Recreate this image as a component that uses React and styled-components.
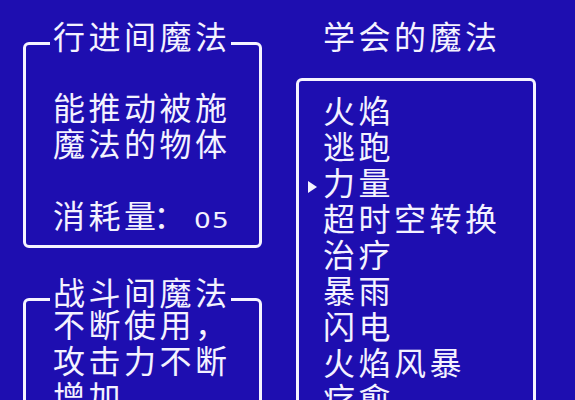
import React from "react";
import styled, { createGlobalStyle } from "styled-components";

const GlobalStyle = createGlobalStyle`
  html, body {
    margin: 0;
    padding: 0;
    background: #1e0eb0;
  }
  body {
    width: 575px;
    height: 400px;
    overflow: hidden;
    font-family: "Noto Sans CJK SC", "Noto Sans", sans-serif;
    font-weight: 400;
    color: #f4f2ff;
  }
`;

const Screen = styled.div`
  display: flex;
  align-items: flex-start;
  gap: 34px;
  padding-left: 23px;
  height: 400px;
  overflow: hidden;
`;

const LeftColumn = styled.div`
  display: flex;
  flex-direction: column;
  width: 239px;
`;

const Panel = styled.fieldset`
  margin: ${(p) => p.$top}px 0 0;
  padding: 0 0 6px 27px;
  border: 3px solid #f6f4ff;
  border-radius: 6px;
  min-width: 0;
  min-height: ${(p) => p.$minHeight || 0}px;
`;

const Legend = styled.legend`
  margin-left: -3px;
  padding: 0 0 16px 3px;
  font-size: 32px;
  line-height: 36px;
  letter-spacing: 3.5px;
`;

const Body = styled.div`
  margin-top: ${(p) => p.$offset}px;
  font-size: 32px;
  line-height: 36px;
  letter-spacing: 3.5px;
`;

const Line = styled.div`
  min-height: 36px;
  white-space: nowrap;
`;

const Colon = styled.span`
  margin-left: -6px;
`;

const Num = styled.span`
  display: inline-block;
  margin-left: 5px;
  font-family: "DejaVu Sans", sans-serif;
  font-weight: 400;
  font-size: 22px;
  letter-spacing: 1px;
  transform: scaleX(1.2);
  transform-origin: left center;
`;

const RightColumn = styled.div`
  display: flex;
  flex-direction: column;
  width: 240px;
`;

const Title = styled.div`
  margin-top: 17px;
  padding-left: 27px;
  font-size: 32px;
  line-height: 36px;
  letter-spacing: 3.5px;
`;

const ListBox = styled.div`
  margin-top: 25px;
  padding: 10px 0 0 24px;
  border: 3px solid #f6f4ff;
  border-radius: 6px;
  min-height: 400px;
  font-size: 32px;
  line-height: 36px;
  letter-spacing: 3.5px;
`;

const Item = styled.div`
  position: relative;
  white-space: nowrap;

  &::before {
    content: "";
    display: ${(p) => (p.$selected ? "block" : "none")};
    position: absolute;
    left: -15px;
    top: 18px;
    width: 0;
    height: 0;
    border-left: 9px solid #f6f4ff;
    border-top: 6.5px solid transparent;
    border-bottom: 6.5px solid transparent;
  }
`;

const spells = ["火焰", "逃跑", "力量", "超时空转换", "治疗", "暴雨", "闪电", "火焰风暴", "疗愈"];

export default function App() {
  return (
    <>
      <GlobalStyle />
      <Screen>
        <LeftColumn>
          <Panel $top={17}>
            <Legend>行进间魔法</Legend>
            <Body $offset={19}>
              <Line>能推动被施</Line>
              <Line>魔法的物体</Line>
              <Line />
              <Line>
                消耗量<Colon>：</Colon>
                <Num>05</Num>
              </Line>
            </Body>
          </Panel>
          <Panel $top={25} $minHeight={200}>
            <Legend>战斗间魔法</Legend>
            <Body $offset={-20}>
              <Line>不断使用，</Line>
              <Line>攻击力不断</Line>
              <Line>增加</Line>
            </Body>
          </Panel>
        </LeftColumn>
        <RightColumn>
          <Title>学会的魔法</Title>
          <ListBox>
            {spells.map((s, i) => (
              <Item key={s} $selected={i === 2}>
                {s}
              </Item>
            ))}
          </ListBox>
        </RightColumn>
      </Screen>
    </>
  );
}
